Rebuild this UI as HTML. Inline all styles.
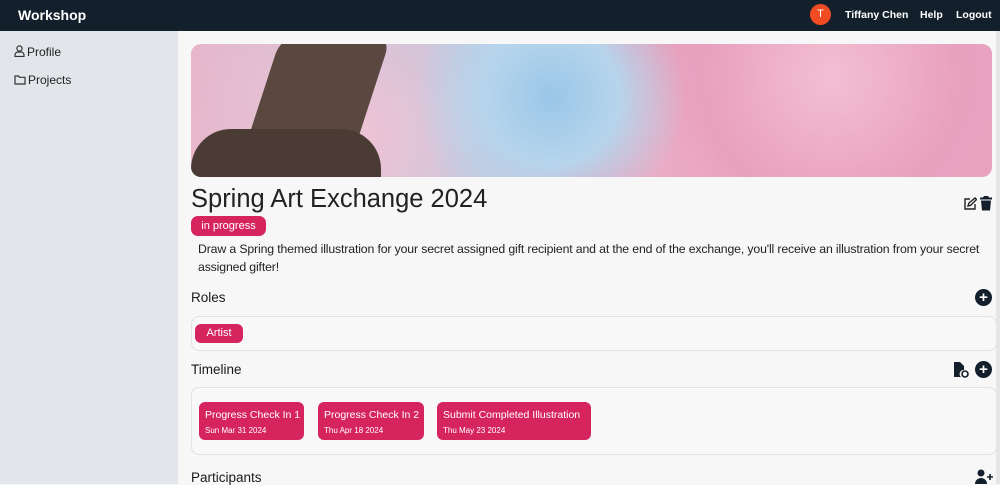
<!DOCTYPE html>
<html><head><style>
*{box-sizing:border-box;margin:0;padding:0}
body{width:1000px;height:484px;overflow:hidden;font-family:"Liberation Sans",sans-serif;background:#f7f7f8;position:relative;color:#1a1a1a}
.hdr{position:absolute;left:0;top:0;width:1000px;height:31px;background:#13202c;color:#fff}
.side{position:absolute;left:0;top:31px;width:178px;height:453px;background:#e2e5ea;font-size:12px;color:#222}
.pink{background:#d6245f;color:#fff;border-radius:6px}
.box{position:absolute;left:191px;width:806px;border:1px solid #e2e2e4;border-radius:8px;background:#f8f8f9}
.circ{position:absolute;width:17px;height:17px;border-radius:50%;background:#13202c;color:#fff;font-size:15px;font-weight:bold;line-height:17px;text-align:center}
.ev{position:absolute;top:402px;height:38px;padding:7px 6px;white-space:nowrap}
.ev b{display:block;font-weight:normal;font-size:10.5px;line-height:12px}
.ev i{display:block;font-style:normal;font-size:8px;line-height:9px;margin-top:5px}
</style></head><body>
<div class="hdr">
<div style="position:absolute;left:18px;top:7px;font-weight:bold;font-size:14px">Workshop</div>
<div style="position:absolute;left:810px;top:4px;width:21px;height:21px;border-radius:50%;background:#f04b22;font-size:11px;text-align:center;line-height:21px">T</div>
<div style="position:absolute;left:845px;top:9px;font-size:10.5px;font-weight:bold">Tiffany Chen</div>
<div style="position:absolute;left:920px;top:9px;font-size:10.5px;font-weight:bold">Help</div>
<div style="position:absolute;left:956px;top:9px;font-size:10.5px;font-weight:bold">Logout</div>
</div>
<div class="side">
<svg style="position:absolute;left:14px;top:14px" width="11" height="12" viewBox="0 0 11 12" fill="none" stroke="#333" stroke-width="1.2"><circle cx="5.5" cy="3.5" r="2.6"/><path d="M1 11.5v-1.5a3 3 0 0 1 3-3h3a3 3 0 0 1 3 3v1.5z"/></svg>
<div style="position:absolute;left:27px;top:14px">Profile</div>
<svg style="position:absolute;left:14px;top:43px" width="12" height="11" viewBox="0 0 12 11" fill="none" stroke="#333" stroke-width="1.2"><path d="M1 2h3.5l1 1.3H11v6.7H1z"/></svg>
<div style="position:absolute;left:28px;top:42px">Projects</div>
</div>
<div style="position:absolute;left:191px;top:44px;width:801px;height:133px;border-radius:10px;overflow:hidden;background:radial-gradient(circle at 45% 40%,#9ac6e8 0,#b6d5ec 15%,transparent 30%),radial-gradient(circle at 80% 25%,#f3bfd3 0,#e8a0bd 20%,transparent 40%),radial-gradient(circle at 20% 70%,#efc3d4 0,transparent 35%),radial-gradient(circle at 65% 80%,#f4c8d8 0,#e69ab6 25%,transparent 45%),linear-gradient(90deg,#e5b2c8,#a9cfe9 40%,#efbad0 60%,#e9a5c1)">
<div style="position:absolute;left:65px;top:-10px;width:110px;height:160px;background:#5a4840;transform:skewX(-18deg);border-radius:20px"></div>
<div style="position:absolute;left:0;top:85px;width:190px;height:60px;background:#4a3b35;border-radius:40px 40px 0 0"></div>
</div>
<div style="position:absolute;left:191px;top:185px;font-size:25.5px;color:#222">Spring Art Exchange 2024</div>
<svg style="position:absolute;left:963px;top:197px" width="14" height="14" viewBox="0 0 14 14" fill="none" stroke="#222" stroke-width="1.4"><path d="M7 2H2v10h10V7M5 9l1-3 6-5 1.5 1.5-6 6z"/></svg>
<svg style="position:absolute;left:980px;top:196px" width="12" height="15" viewBox="0 0 12 15"><path fill="#13202c" d="M4 0h4l1 1.5h3v2H0v-2h3zM1 4.5h10l-1 10H2z"/></svg>
<div class="pink" style="position:absolute;left:191px;top:216px;width:75px;height:20px;font-size:11px;text-align:center;line-height:20px;border-radius:7px">in progress</div>
<div style="position:absolute;left:198px;top:240px;width:800px;font-size:12.3px;letter-spacing:-0.15px;line-height:18px;color:#222">Draw a Spring themed illustration for your secret assigned gift recipient and at the end of the exchange, you'll receive an illustration from your secret assigned gifter!</div>
<div style="position:absolute;left:191px;top:290px;font-size:13.5px">Roles</div>
<div class="circ" style="left:975px;top:289px">+</div>
<div class="box" style="top:316px;height:35px"></div>
<div class="pink" style="position:absolute;left:195px;top:324px;width:48px;height:19px;font-size:11px;text-align:center;line-height:19px">Artist</div>
<div style="position:absolute;left:191px;top:362px;font-size:13.5px">Timeline</div>
<svg style="position:absolute;left:953px;top:362px" width="16" height="16" viewBox="0 0 16 16"><path fill="#13202c" d="M1 0h6l4 4v4a4 4 0 0 0-3 7H1z"/><circle cx="12" cy="12" r="3" fill="none" stroke="#13202c" stroke-width="1.6"/></svg>
<div class="circ" style="left:975px;top:361px">+</div>
<div class="box" style="top:387px;height:68px"></div>
<div class="pink ev" style="left:199px;width:105px"><b>Progress Check In 1</b><i>Sun Mar 31 2024</i></div>
<div class="pink ev" style="left:318px;width:106px"><b>Progress Check In 2</b><i>Thu Apr 18 2024</i></div>
<div class="pink ev" style="left:437px;width:154px"><b>Submit Completed Illustration</b><i>Thu May 23 2024</i></div>
<div style="position:absolute;left:191px;top:470px;font-size:13.5px">Participants</div>
<svg style="position:absolute;left:975px;top:469px" width="18" height="15" viewBox="0 0 18 15"><circle cx="6" cy="4" r="3.5" fill="#13202c"/><path fill="#13202c" d="M0 15a6 6 0 0 1 12 0z"/><path d="M15 5v6M12 8h6" stroke="#13202c" stroke-width="1.6"/></svg>
<div style="position:absolute;left:996px;top:31px;width:4px;height:453px;background:#e6e6e8"></div>
</body></html>
